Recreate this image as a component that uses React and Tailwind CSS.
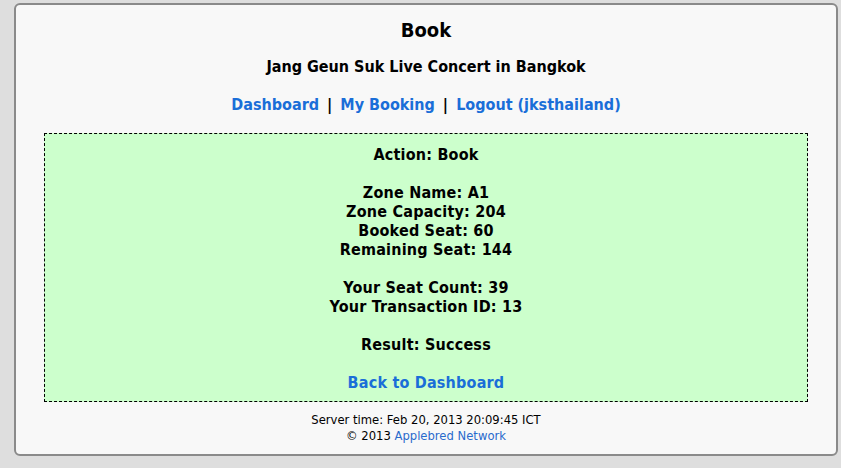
export default function App() {
  const font = { fontFamily: '"DejaVu Sans Condensed", "DejaVu Sans", Tahoma, sans-serif' };
  return (
    <div className="min-h-screen w-[841px] h-[468px] bg-[#dedede] pt-[3px] pl-[14px]" style={font}>
      <div className="w-[824px] h-[453px] border-2 border-[#8a8a8a] rounded-[6px] bg-[#f8f8f8] pt-[13px] px-[28px] text-black">
        <h1 className="text-center text-[20px] leading-[24px] font-bold">Book</h1>
        <h2 className="mt-[15px] text-center text-[16px] leading-[19px] font-bold">Jang Geun Suk Live Concert in Bangkok</h2>
        <div className="mt-[19px] text-center text-[16px] leading-[19px] font-bold">
          <a className="text-[#1a6ed8]">Dashboard</a>
          <span className="mx-[3px]"> | </span>
          <a className="text-[#1a6ed8]">My Booking</a>
          <span className="mx-[3px]"> | </span>
          <a className="text-[#1a6ed8]">Logout (jksthailand)</a>
        </div>
        <div className="mt-[19px] w-[764px] border border-dashed border-black bg-[#ccffcc] pt-[11px] pb-[9px] text-center text-[16px] leading-[19px] font-bold tracking-[0.2px]">
          <div>Action: Book</div>
          <div>&nbsp;</div>
          <div>Zone Name: A1</div>
          <div>Zone Capacity: 204</div>
          <div>Booked Seat: 60</div>
          <div>Remaining Seat: 144</div>
          <div>&nbsp;</div>
          <div>Your Seat Count: 39</div>
          <div>Your Transaction ID: 13</div>
          <div>&nbsp;</div>
          <div>Result: Success</div>
          <div>&nbsp;</div>
          <div><a className="text-[#1a6ed8]">Back to Dashboard</a></div>
        </div>
        <div className="mt-[10px] text-center text-[11.6px] leading-[16px]" style={{ fontFamily: '"DejaVu Sans", Tahoma, sans-serif' }}>
          <div>Server time: Feb 20, 2013 20:09:45 ICT</div>
          <div>© 2013 <a className="text-[#2a6acc]">Applebred Network</a></div>
        </div>
      </div>
    </div>
  );
}
